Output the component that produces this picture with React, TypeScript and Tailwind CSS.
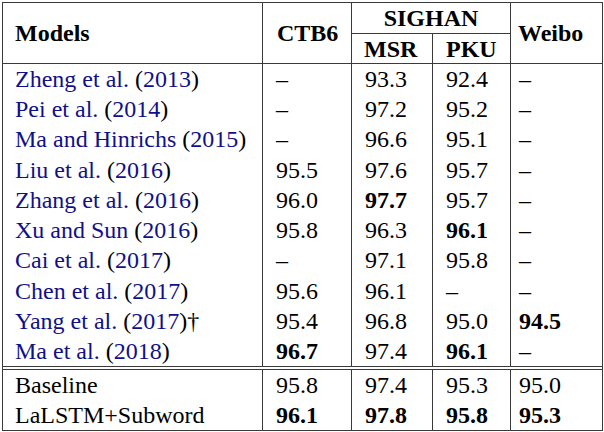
const rows = [
  { name: "Zheng et al.", year: "2013", ctb: "–", msr: "93.3", pku: "92.4", weibo: "–" },
  { name: "Pei et al.", year: "2014", ctb: "–", msr: "97.2", pku: "95.2", weibo: "–" },
  { name: "Ma and Hinrichs", year: "2015", ctb: "–", msr: "96.6", pku: "95.1", weibo: "–" },
  { name: "Liu et al.", year: "2016", ctb: "95.5", msr: "97.6", pku: "95.7", weibo: "–" },
  { name: "Zhang et al.", year: "2016", ctb: "96.0", msr: "97.7", pku: "95.7", weibo: "–", bold: ["msr"] },
  { name: "Xu and Sun", year: "2016", ctb: "95.8", msr: "96.3", pku: "96.1", weibo: "–", bold: ["pku"] },
  { name: "Cai et al.", year: "2017", ctb: "–", msr: "97.1", pku: "95.8", weibo: "–" },
  { name: "Chen et al.", year: "2017", ctb: "95.6", msr: "96.1", pku: "–", weibo: "–" },
  { name: "Yang et al.", year: "2017", dagger: true, ctb: "95.4", msr: "96.8", pku: "95.0", weibo: "94.5", bold: ["weibo"] },
  { name: "Ma et al.", year: "2018", ctb: "96.7", msr: "97.4", pku: "96.1", weibo: "–", bold: ["ctb", "pku"] },
];

const ours = [
  { name: "Baseline", ctb: "95.8", msr: "97.4", pku: "95.3", weibo: "95.0", bold: [] as string[] },
  { name: "LaLSTM+Subword", ctb: "96.1", msr: "97.8", pku: "95.8", weibo: "95.3", bold: ["ctb", "msr", "pku", "weibo"] },
];

const line = "border-[#3a3a3a]";

const Num = ({ v, b }: { v: string; b?: boolean }) => (
  <span className={b ? "font-bold" : ""}>{v}</span>
);

export default function App() {
  return (
    <div className="w-[604px] h-[432px] bg-white pt-[2px] pl-[2px] text-black text-[24px] leading-none" style={{ fontFamily: '"Liberation Serif", "Times New Roman", serif' }}>
      <table className={`table-fixed border-collapse border ${line} w-[600px]`}>
        <colgroup>
          <col className="w-[260px]" />
          <col className="w-[89px]" />
          <col className="w-[81px]" />
          <col className="w-[78px]" />
          <col className="w-[92px]" />
        </colgroup>
        <thead>
          <tr className="h-[31px]">
            <th rowSpan={2} className={`border ${line} text-left font-bold pl-[12px]`}>Models</th>
            <th rowSpan={2} className={`border ${line} text-left font-bold pl-[14px]`}>CTB6</th>
            <th colSpan={2} className={`border ${line} text-center font-bold`}>SIGHAN</th>
            <th rowSpan={2} className={`border ${line} text-left font-bold pl-[7px]`}>Weibo</th>
          </tr>
          <tr className="h-[30px]">
            <th className={`border ${line} text-left font-bold pl-[12px]`}>MSR</th>
            <th className={`border ${line} text-left font-bold pl-[13px]`}>PKU</th>
          </tr>
        </thead>
        <tbody>
          {rows.map((r, i) => (
            <tr key={i} className="h-[30.3px]">
              <td className={`border-x ${line} pl-[12px] whitespace-nowrap`}>
                <span className="text-[#10108a]">{r.name}</span> (
                <span className="text-[#10108a]">{r.year}</span>){r.dagger ? "†" : ""}
              </td>
              <td className={`border-x ${line} pl-[13px]`}><Num v={r.ctb} b={r.bold?.includes("ctb")} /></td>
              <td className={`border-x ${line} pl-[13px]`}><Num v={r.msr} b={r.bold?.includes("msr")} /></td>
              <td className={`border-x ${line} pl-[13px]`}><Num v={r.pku} b={r.bold?.includes("pku")} /></td>
              <td className={`border-x ${line} pl-[8px]`}><Num v={r.weibo} b={r.bold?.includes("weibo")} /></td>
            </tr>
          ))}
          <tr className="h-[3px]">
            <td colSpan={5} className={`border-t border-b ${line} p-0`}></td>
          </tr>
          {ours.map((r, i) => (
            <tr key={i} className="h-[30.5px]">
              <td className={`border-x ${line} pl-[12px] whitespace-nowrap`}>{r.name}</td>
              <td className={`border-x ${line} pl-[13px]`}><Num v={r.ctb} b={r.bold.includes("ctb")} /></td>
              <td className={`border-x ${line} pl-[13px]`}><Num v={r.msr} b={r.bold.includes("msr")} /></td>
              <td className={`border-x ${line} pl-[13px]`}><Num v={r.pku} b={r.bold.includes("pku")} /></td>
              <td className={`border-x ${line} pl-[8px]`}><Num v={r.weibo} b={r.bold.includes("weibo")} /></td>
            </tr>
          ))}
        </tbody>
      </table>
    </div>
  );
}
